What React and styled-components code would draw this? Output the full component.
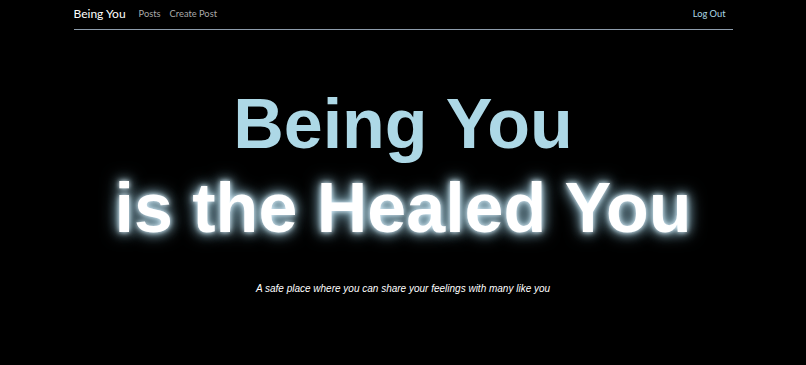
import React from "react";
import styled, { createGlobalStyle } from "styled-components";

const GlobalStyle = createGlobalStyle`
  html, body {
    margin: 0;
    padding: 0;
    background: #000;
  }
  body {
    font-family: "Lato", "Noto Sans", sans-serif;
  }
`;

const Page = styled.div`
  min-height: 365px;
  background: #000;
`;

const Nav = styled.nav`
  width: 659px;
  margin: 0 auto;
  height: 30px;
  display: flex;
  align-items: center;
  border-bottom: 1px solid #8d9cab;
  box-sizing: border-box;
  padding-bottom: 2px;
`;

const Brand = styled.a`
  color: #fff;
  font-size: 12px;
  text-decoration: none;
  margin-right: 13px;
`;

const NavLink = styled.a`
  color: ${({ accent }) => (accent ? "#add8e6" : "#a9a9a9")};
  font-size: 9.3px;
  text-decoration: none;
  margin-right: ${({ accent }) => (accent ? "7px" : "9px")};
`;

const Spacer = styled.div`
  flex: 1;
`;

const Hero = styled.section`
  text-align: center;
  font-family: "Liberation Sans", Arial, sans-serif;
  padding-top: 52px;
`;

const Title = styled.h1`
  margin: 0;
  font-size: 70px;
  line-height: 84px;
  font-weight: 700;
  color: ${({ glow }) => (glow ? "#fff" : "#add8e6")};
  text-shadow: ${({ glow }) =>
    glow ? "0 0 5px #e0f4ff, 0 0 12px #a8d0e0, 0 0 18px #6f98aa" : "none"};
`;

const Tagline = styled.p`
  margin: 33px 0 0;
  color: #fff;
  font-style: italic;
  font-size: 10px;
`;

export default function App() {
  return (
    <Page>
      <GlobalStyle />
      <Nav>
        <Brand href="#">Being You</Brand>
        <NavLink href="#">Posts</NavLink>
        <NavLink href="#">Create Post</NavLink>
        <Spacer />
        <NavLink href="#" accent>
          Log Out
        </NavLink>
      </Nav>
      <Hero>
        <Title>Being You</Title>
        <Title glow>is the Healed You</Title>
        <Tagline>A safe place where you can share your feelings with many like you</Tagline>
      </Hero>
    </Page>
  );
}
